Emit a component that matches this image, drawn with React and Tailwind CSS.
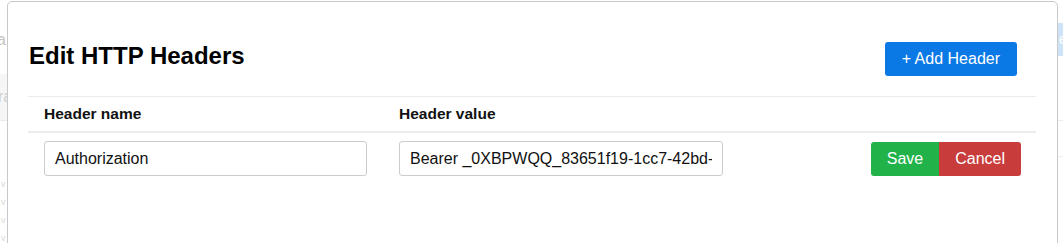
import React, {useState} from 'react';

const font = {fontFamily: '"Liberation Sans", Arial, sans-serif'};

function PageBehind() {
  // faint bits of the page that peek out on both sides of the dialog
  return (
    <div className="absolute inset-0 flex justify-between text-[#c4c4c4] text-[16px]">
      <div className="w-[7px] overflow-hidden flex flex-col">
        <div className="h-[31px]" />
        <div className="leading-[18px] -ml-[3px]">a</div>
        <div className="h-[26px]" />
        <div className="h-[47px] bg-[#f6f6f6] border-b border-[#ececec] flex items-center -ml-[2px] text-[#d0d0d0]">ra</div>
        <div className="h-[60px]" />
        <div className="flex flex-col gap-[9px] text-[9px] leading-[9px] text-[#d8d8d8] pl-[1px]">
          <span>v</span>
          <span>v</span>
          <span>v</span>
          <span>v</span>
        </div>
      </div>
      <div className="w-[5px] overflow-hidden flex flex-col">
        <div className="h-[23px]" />
        <div className="h-[33px] bg-[#cfe3f8] text-white text-[14px] leading-[33px] pl-[1px]">e</div>
        <div className="h-[65px] border-b border-[#ededed]" />
        <div className="h-[36px] border-b border-[#ededed]" />
      </div>
    </div>
  );
}

function HeaderRow({row, onChange}) {
  return (
    <div className="grid grid-cols-[355px_356px_1fr] items-start">
      <div className="pl-4 pt-[8px]">
        <input
          className="w-[323px] h-[35px] border border-[#cccccc] rounded-[3px] px-[10px] text-[16px] text-[#111] outline-none"
          style={font}
          value={row.name}
          onChange={(e) => onChange({...row, name: e.target.value})}
        />
      </div>
      <div className="pl-4 pt-[8px]">
        <input
          className="w-[324px] h-[35px] border border-[#cccccc] rounded-[3px] px-[10px] text-[16px] text-[#111] outline-none"
          style={font}
          value={row.value}
          onChange={(e) => onChange({...row, value: e.target.value})}
        />
      </div>
      <div className="flex justify-end pr-[15px] pt-[9px]">
        <button className="h-[34px] px-4 bg-[#21b34a] text-white text-[16px] rounded-l-[3px]">Save</button>
        <button className="h-[34px] px-4 bg-[#c93c3c] text-white text-[16px] rounded-r-[3px]">Cancel</button>
      </div>
    </div>
  );
}

export default function App() {
  const [rows, setRows] = useState([
    {id: 1, name: 'Authorization', value: 'Bearer _0XBPWQQ_83651f19-1cc7-42bd-a1b0-6d2e3f4c5a7b'},
  ]);

  return (
    <div className="relative w-[1063px] h-[243px] overflow-hidden bg-white" style={font}>
      <PageBehind />
      <div className="absolute left-[7px] top-[1px] w-[1051px] h-[280px] bg-white border border-[#c9c9c9] rounded-t-[5px] pl-5 pr-[21px]">
        <div className="flex justify-between items-start pt-[40px] pb-[20px]">
          <h2 className="text-[24px] leading-[28px] font-bold text-black pl-[1px]">Edit HTTP Headers</h2>
          <button
            className="h-[34px] px-[17px] bg-[#0a79e6] text-white text-[16px] rounded-[3px] mr-[19px]"
            onClick={() => setRows([...rows, {id: Date.now(), name: '', value: ''}])}
          >
            + Add Header
          </button>
        </div>
        <div className="border-t border-[#ebebeb]">
          <div className="grid grid-cols-[355px_356px_1fr] h-[36px] items-center border-b-2 border-[#ececec] text-[15.5px] font-bold text-[#111]">
            <div className="pl-4">Header name</div>
            <div className="pl-4">Header value</div>
            <div />
          </div>
          {rows.map((row) => (
            <HeaderRow
              key={row.id}
              row={row}
              onChange={(next) => setRows(rows.map((r) => (r.id === row.id ? next : r)))}
            />
          ))}
        </div>
      </div>
    </div>
  );
}
